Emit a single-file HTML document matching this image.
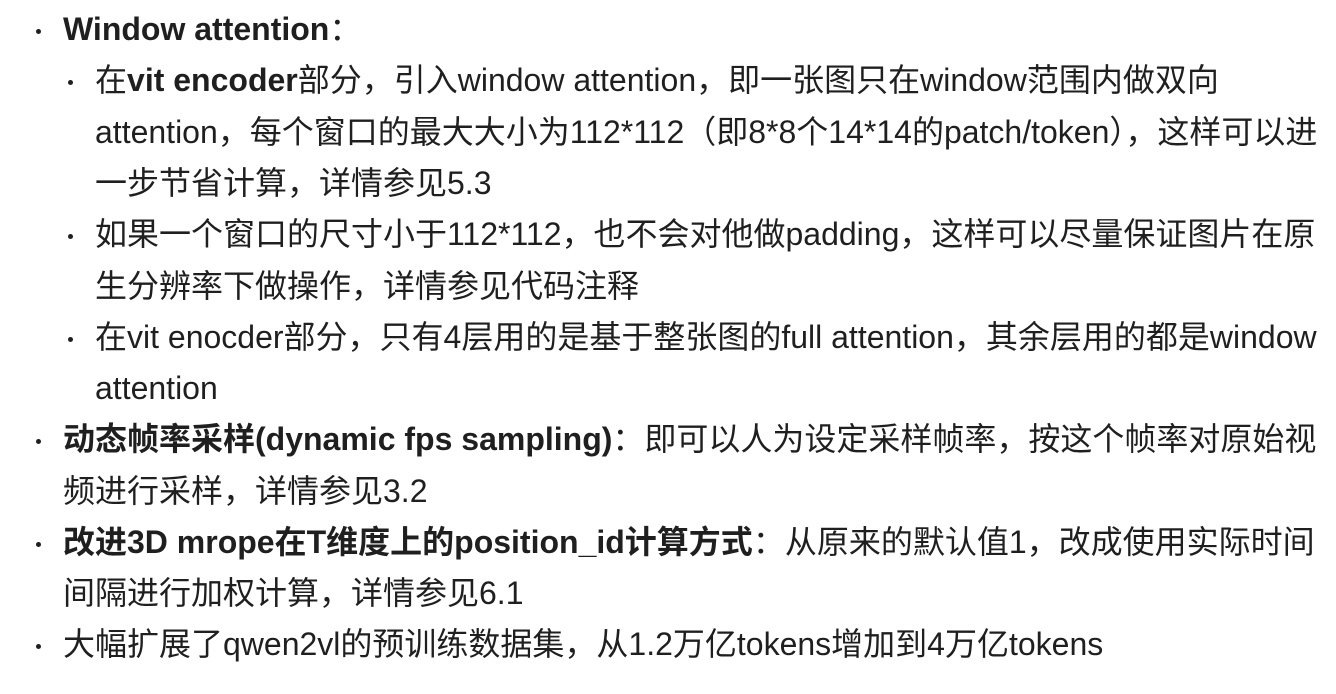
<!DOCTYPE html>
<html><head><meta charset="utf-8"><style>
html,body{margin:0;padding:0;background:#fff;width:1336px;height:694px;overflow:hidden}
body{font-family:"Liberation Sans","Noto Sans CJK SC",sans-serif;font-size:32px;color:#1f1f1f}
.l{position:absolute;white-space:nowrap;height:51px;line-height:51px}
.d{position:absolute;width:5px;height:5px;border-radius:50%;background:#1f1f1f}
b{font-weight:bold}
</style></head><body>
<div class="d" style="left:36px;top:29px"></div>
<div class="l" style="left:63px;top:4px"><b>Window attention</b>：</div>
<div class="d" style="left:68px;top:80px"></div>
<div class="l" style="left:95px;top:55px">在<b>vit encoder</b>部分，引入window attention，即一张图只在window范围内做双向</div>
<div class="l" style="left:95px;top:107px">attention，每个窗口的最大大小为112*112（即8*8个14*14的patch/token），这样可以进</div>
<div class="l" style="left:95px;top:158px">一步节省计算，详情参见5.3</div>
<div class="d" style="left:68px;top:234px"></div>
<div class="l" style="left:95px;top:209px">如果一个窗口的尺寸小于112*112，也不会对他做padding，这样可以尽量保证图片在原</div>
<div class="l" style="left:95px;top:261px">生分辨率下做操作，详情参见代码注释</div>
<div class="d" style="left:68px;top:337px"></div>
<div class="l" style="left:95px;top:312px">在vit enocder部分，只有4层用的是基于整张图的full attention，其余层用的都是window</div>
<div class="l" style="left:95px;top:363px">attention</div>
<div class="d" style="left:36px;top:439px"></div>
<div class="l" style="left:63px;top:414px"><b>动态帧率采样(dynamic fps sampling)</b>：即可以人为设定采样帧率，按这个帧率对原始视</div>
<div class="l" style="left:63px;top:466px">频进行采样，详情参见3.2</div>
<div class="d" style="left:36px;top:542px"></div>
<div class="l" style="left:63px;top:517px"><b>改进3D mrope在T维度上的position_id计算方式</b>：从原来的默认值1，改成使用实际时间</div>
<div class="l" style="left:63px;top:568px">间隔进行加权计算，详情参见6.1</div>
<div class="d" style="left:36px;top:644px"></div>
<div class="l" style="left:63px;top:619px">大幅扩展了qwen2vl的预训练数据集，从1.2万亿tokens增加到4万亿tokens</div>
</body></html>
